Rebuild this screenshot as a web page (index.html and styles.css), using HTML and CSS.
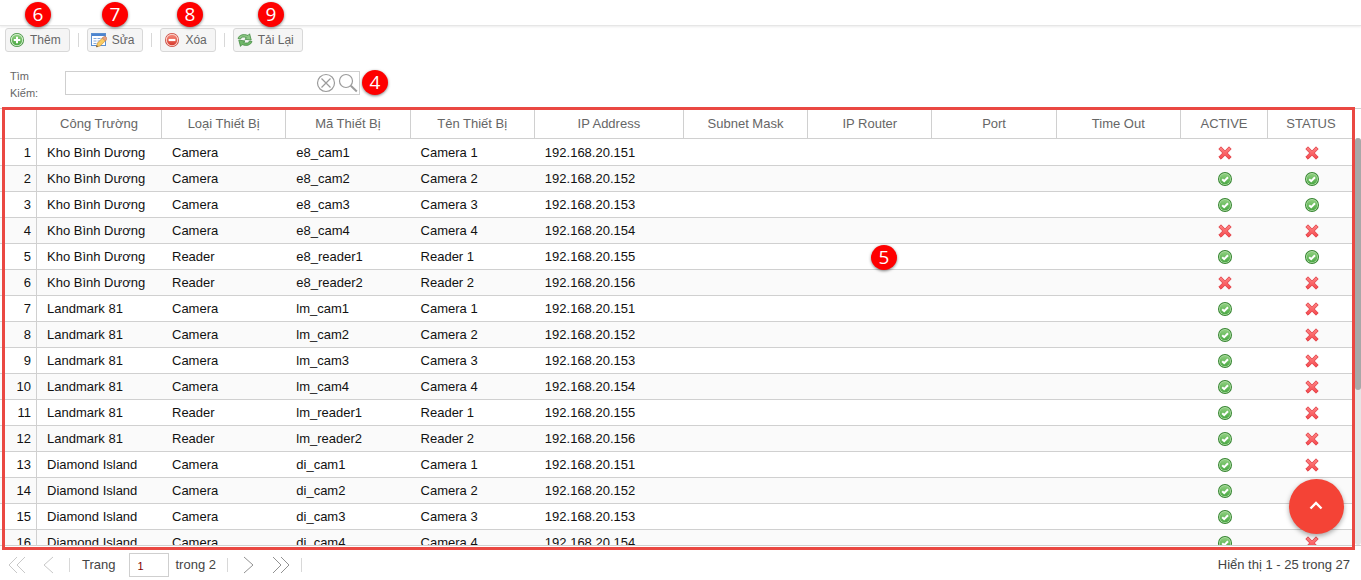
FILE: index.html
```html
<!DOCTYPE html>
<html lang="vi">
<head>
<meta charset="utf-8">
<title>Danh sách thiết bị</title>
<link rel="stylesheet" href="styles.css">
</head>
<body>
<svg class="sprite" aria-hidden="true">
  <defs>
    <linearGradient id="gGreen" x1="0" y1="0" x2="0" y2="1"><stop offset="0" stop-color="#8fd07f"/><stop offset="1" stop-color="#4aa843"/></linearGradient>
    <linearGradient id="gRed" x1="0" y1="0" x2="0" y2="1"><stop offset="0" stop-color="#f58a7a"/><stop offset="1" stop-color="#d6392c"/></linearGradient>
    <linearGradient id="gCross" x1="0" y1="0" x2="0" y2="1"><stop offset="0" stop-color="#ff8585"/><stop offset="1" stop-color="#f5474c"/></linearGradient>
    <symbol id="ok" viewBox="0 0 16 16">
      <circle cx="8" cy="8" r="7" fill="#35852f"/><circle cx="8" cy="8" r="6" fill="#b5dfac"/><circle cx="8" cy="8" r="5.300" fill="url(#gGreen)"/>
      <path d="M5.200 8.200l2 2L11 6.300" fill="none" stroke="#fff" stroke-width="2"/>
    </symbol>
    <symbol id="no" viewBox="0 0 16 16">
      <path d="M4 1.800L8 5.900l4-4.100L14.200 4 10.300 8l3.900 4-2.200 2.200-4-4-4 4L1.800 12l3.900-4-3.900-4z" fill="url(#gCross)" stroke="#dc3138" stroke-width=".8" stroke-linejoin="round"/>
    </symbol>
    <symbol id="add" viewBox="0 0 16 16">
      <circle cx="8" cy="8" r="7" fill="#3f8f3b"/><circle cx="8" cy="8" r="6.200" fill="#d3ecce"/><circle cx="8" cy="8" r="5.200" fill="url(#gGreen)"/>
      <path d="M8 4.800v6.400M4.800 8h6.400" stroke="#fff" stroke-width="2"/>
    </symbol>
    <symbol id="del" viewBox="0 0 16 16">
      <circle cx="8" cy="8" r="7" fill="#c9473c"/><circle cx="8" cy="8" r="6.200" fill="#fbd3cc"/><circle cx="8" cy="8" r="5.200" fill="url(#gRed)"/>
      <path d="M4.600 8h6.800" stroke="#fff" stroke-width="2.200"/>
    </symbol>
    <symbol id="edit" viewBox="0 0 16 16">
      <rect x=".5" y="1.500" width="14" height="12" fill="#fff" stroke="#5b8fd0"/>
      <path d="M1 3h13" stroke="#4c84cf" stroke-width="2"/>
      <path d="M2.500 6.500h3M6.500 6.500h3M10.500 6.500h3M2.500 9h3M6.500 9h3M2.500 11.500h3" stroke="#86abdc"/>
      <path d="M5.300 15l1.200-4 5.800-5.800 2.900 2.800-5.800 5.800z" fill="#f9cc62" stroke="#c58a35" stroke-width=".7"/>
      <path d="M11.300 6.100l1.400-1.400c.6-.6 1.500-.5 2 0l.8.800c.6.600.6 1.400 0 2l-1.300 1.300z" fill="#e8a080" stroke="#b9775c" stroke-width=".6"/>
      <path d="M5.300 15l.5-1.700 1.200 1.200z" fill="#444"/>
    </symbol>
    <symbol id="reload" viewBox="0 0 16 16">
      <path d="M1 6.500C2 3 6.500 1.500 11 3.500L12.600 1.800 14.200 8 8 7.300 9.500 5.700C6.500 4.400 4.300 4.800 3.500 7z" fill="#8cc784" stroke="#448c43" stroke-width=".8" stroke-linejoin="round"/>
      <path d="M15 9.500C14 13 9.500 14.500 5 12.500L3.500 14.400 1.800 8.200 8 8.900 6.500 10.400C9.500 11.600 11.700 11.200 12.500 9z" fill="#6fb768" stroke="#448c43" stroke-width=".8" stroke-linejoin="round"/>
    </symbol>
  </defs>
</svg>

<header class="topbar"></header>

<div class="toolbar">
  <button class="btn" type="button"><svg class="ico"><use href="#add"/></svg>Thêm</button>
  <span class="sep"></span>
  <button class="btn" type="button"><svg class="ico"><use href="#edit"/></svg>Sửa</button>
  <span class="sep"></span>
  <button class="btn" type="button"><svg class="ico"><use href="#del"/></svg>Xóa</button>
  <span class="sep"></span>
  <button class="btn" type="button"><svg class="ico"><use href="#reload"/></svg>Tải Lại</button>
</div>

<form class="search">
  <label class="search-label" for="q">Tìm Kiếm:</label>
  <div class="search-box">
    <input id="q" class="search-input" type="text">
    <button class="icon-btn" type="button" aria-label="Xóa tìm kiếm"><svg width="20" height="20" viewBox="0 0 20 20" fill="none" stroke="#9b9b9b" stroke-width="1.200"><circle cx="10" cy="10" r="8.500"/><path d="M5.500 5.500l9 9M14.500 5.500l-9 9"/></svg></button>
    <button class="icon-btn" type="button" aria-label="Tìm"><svg width="20" height="20" viewBox="0 0 20 20" fill="none" stroke="#9b9b9b" stroke-width="1.200"><circle cx="8" cy="8" r="6.500"/><path d="M12.800 12.800l6 5.700" stroke-width="2"/></svg></button>
  </div>
</form>

<main class="grid">
  <div class="grid-view">
    <table class="devices">
      <colgroup><col class="c-num"><col class="c-site"><col><col><col><col class="c-ip"><col><col><col><col><col class="c-flag"><col class="c-flag"></colgroup>
      <thead>
        <tr><th></th><th>Công Trường</th><th>Loại Thiết Bị</th><th>Mã Thiết Bị</th><th>Tên Thiết Bị</th><th>IP Address</th><th>Subnet Mask</th><th>IP Router</th><th>Port</th><th>Time Out</th><th>ACTIVE</th><th>STATUS</th></tr>
      </thead>
      <tbody>
        <tr><td>1</td><td>Kho Bình Dương</td><td>Camera</td><td>e8_cam1</td><td>Camera 1</td><td>192.168.20.151</td><td></td><td></td><td></td><td></td><td><svg class="flag"><use href="#no"/></svg></td><td><svg class="flag"><use href="#no"/></svg></td></tr>
        <tr><td>2</td><td>Kho Bình Dương</td><td>Camera</td><td>e8_cam2</td><td>Camera 2</td><td>192.168.20.152</td><td></td><td></td><td></td><td></td><td><svg class="flag"><use href="#ok"/></svg></td><td><svg class="flag"><use href="#ok"/></svg></td></tr>
        <tr><td>3</td><td>Kho Bình Dương</td><td>Camera</td><td>e8_cam3</td><td>Camera 3</td><td>192.168.20.153</td><td></td><td></td><td></td><td></td><td><svg class="flag"><use href="#ok"/></svg></td><td><svg class="flag"><use href="#ok"/></svg></td></tr>
        <tr><td>4</td><td>Kho Bình Dương</td><td>Camera</td><td>e8_cam4</td><td>Camera 4</td><td>192.168.20.154</td><td></td><td></td><td></td><td></td><td><svg class="flag"><use href="#no"/></svg></td><td><svg class="flag"><use href="#no"/></svg></td></tr>
        <tr><td>5</td><td>Kho Bình Dương</td><td>Reader</td><td>e8_reader1</td><td>Reader 1</td><td>192.168.20.155</td><td></td><td></td><td></td><td></td><td><svg class="flag"><use href="#ok"/></svg></td><td><svg class="flag"><use href="#ok"/></svg></td></tr>
        <tr><td>6</td><td>Kho Bình Dương</td><td>Reader</td><td>e8_reader2</td><td>Reader 2</td><td>192.168.20.156</td><td></td><td></td><td></td><td></td><td><svg class="flag"><use href="#no"/></svg></td><td><svg class="flag"><use href="#no"/></svg></td></tr>
        <tr><td>7</td><td>Landmark 81</td><td>Camera</td><td>lm_cam1</td><td>Camera 1</td><td>192.168.20.151</td><td></td><td></td><td></td><td></td><td><svg class="flag"><use href="#ok"/></svg></td><td><svg class="flag"><use href="#no"/></svg></td></tr>
        <tr><td>8</td><td>Landmark 81</td><td>Camera</td><td>lm_cam2</td><td>Camera 2</td><td>192.168.20.152</td><td></td><td></td><td></td><td></td><td><svg class="flag"><use href="#ok"/></svg></td><td><svg class="flag"><use href="#no"/></svg></td></tr>
        <tr><td>9</td><td>Landmark 81</td><td>Camera</td><td>lm_cam3</td><td>Camera 3</td><td>192.168.20.153</td><td></td><td></td><td></td><td></td><td><svg class="flag"><use href="#ok"/></svg></td><td><svg class="flag"><use href="#no"/></svg></td></tr>
        <tr><td>10</td><td>Landmark 81</td><td>Camera</td><td>lm_cam4</td><td>Camera 4</td><td>192.168.20.154</td><td></td><td></td><td></td><td></td><td><svg class="flag"><use href="#ok"/></svg></td><td><svg class="flag"><use href="#no"/></svg></td></tr>
        <tr><td>11</td><td>Landmark 81</td><td>Reader</td><td>lm_reader1</td><td>Reader 1</td><td>192.168.20.155</td><td></td><td></td><td></td><td></td><td><svg class="flag"><use href="#ok"/></svg></td><td><svg class="flag"><use href="#no"/></svg></td></tr>
        <tr><td>12</td><td>Landmark 81</td><td>Reader</td><td>lm_reader2</td><td>Reader 2</td><td>192.168.20.156</td><td></td><td></td><td></td><td></td><td><svg class="flag"><use href="#ok"/></svg></td><td><svg class="flag"><use href="#no"/></svg></td></tr>
        <tr><td>13</td><td>Diamond Island</td><td>Camera</td><td>di_cam1</td><td>Camera 1</td><td>192.168.20.151</td><td></td><td></td><td></td><td></td><td><svg class="flag"><use href="#ok"/></svg></td><td><svg class="flag"><use href="#no"/></svg></td></tr>
        <tr><td>14</td><td>Diamond Island</td><td>Camera</td><td>di_cam2</td><td>Camera 2</td><td>192.168.20.152</td><td></td><td></td><td></td><td></td><td><svg class="flag"><use href="#ok"/></svg></td><td><svg class="flag"><use href="#no"/></svg></td></tr>
        <tr><td>15</td><td>Diamond Island</td><td>Camera</td><td>di_cam3</td><td>Camera 3</td><td>192.168.20.153</td><td></td><td></td><td></td><td></td><td><svg class="flag"><use href="#ok"/></svg></td><td><svg class="flag"><use href="#no"/></svg></td></tr>
        <tr><td>16</td><td>Diamond Island</td><td>Camera</td><td>di_cam4</td><td>Camera 4</td><td>192.168.20.154</td><td></td><td></td><td></td><td></td><td><svg class="flag"><use href="#ok"/></svg></td><td><svg class="flag"><use href="#no"/></svg></td></tr>
      </tbody>
    </table>
  </div>
  <div class="scroll"><div class="track"><div class="thumb"></div></div></div>
  <div class="frame"></div>
</main>

<footer class="pager">
  <button class="page-btn" type="button" aria-label="Trang đầu" disabled><svg width="18" height="18" viewBox="0 0 18 18"><path d="M9 1L1 9l8 8M17 1L9 9l8 8"/></svg></button>
  <button class="page-btn" type="button" aria-label="Trang trước" disabled><svg width="18" height="18" viewBox="0 0 18 18"><path d="M13 1L4 9l9 8"/></svg></button>
  <span class="sep"></span>
  <label class="page-label" for="page">Trang</label>
  <input id="page" class="page-input" type="text" value="1">
  <span class="page-total">trong 2</span>
  <span class="sep"></span>
  <button class="page-btn" type="button" aria-label="Trang sau"><svg width="18" height="18" viewBox="0 0 18 18"><path d="M4 1l9 8-9 8"/></svg></button>
  <button class="page-btn" type="button" aria-label="Trang cuối"><svg width="18" height="18" viewBox="0 0 18 18"><path d="M1 1l8 8-8 8M9 1l8 8-8 8"/></svg></button>
  <span class="sep"></span>
  <span class="summary">Hiển thị 1 - 25 trong 27</span>
</footer>

<button class="fab" type="button" aria-label="Lên đầu trang"><svg width="15" height="11" viewBox="0 0 15 11"><path d="M1.500 7.500L7 2l5.500 5.500" fill="none" stroke="#fff" stroke-width="2.400"/></svg></button>

<span class="pin pin-add">6</span>
<span class="pin pin-edit">7</span>
<span class="pin pin-del">8</span>
<span class="pin pin-reload">9</span>
<span class="pin pin-search">4</span>
<span class="pin pin-grid">5</span>
</body>
</html>
```
FILE: styles.css
```css
* { box-sizing: border-box; }

body {
  margin: 0;
  height: 100vh;
  display: flex;
  flex-direction: column;
  position: relative;
  overflow: hidden;
  background: #fff;
  color: #222;
  font: 13px/16px "Liberation Sans", Arial, sans-serif;
}

button, input { font: inherit; color: inherit; }

.sprite { position: absolute; width: 0; height: 0; }

.topbar {
  height: 26px;
  flex: none;
  border-bottom: 1px solid #e6e6e6;
  box-shadow: 0 1px 2px rgba(0, 0, 0, .08);
}

.toolbar {
  display: flex;
  align-items: center;
  gap: 8px;
  padding: 2px 5px;
}

.btn {
  display: flex;
  align-items: center;
  gap: 5px;
  height: 24px;
  padding: 0 8px 0 3px;
  border: 1px solid #d8d8d8;
  border-radius: 3px;
  background: #f5f5f5;
  color: #666;
  font-size: 12px;
}

.ico, .flag { display: block; width: 16px; height: 16px; }
.flag { margin: 0 auto; }

.sep { width: 1px; height: 14px; background: #d8d8d8; }

.search {
  display: flex;
  align-items: flex-start;
  padding: 14px 0 6px 10px;
}

.search-label {
  width: 55px;
  padding-right: 20px;
  color: #666;
  font-size: 11px;
  line-height: 17px;
}

.search-box {
  display: flex;
  align-items: center;
  gap: 2px;
  width: 295px;
  height: 24px;
  margin-top: 3px;
  padding-right: 1px;
  border: 1px solid #cfcfcf;
}

.search-input { flex: 1; min-width: 0; border: 0; outline: 0; padding: 0 6px; background: none; }

.icon-btn { display: flex; padding: 0; border: 0; background: none; }

.grid {
  position: relative;
  display: flex;
  flex: 1;
  min-height: 0;
  border-top: 1px solid #d0d0d0;
  border-bottom: 1px solid #d0d0d0;
}

.grid-view { flex: 1; overflow: hidden; }

.devices {
  width: 100%;
  table-layout: fixed;
  border-collapse: separate;
  border-spacing: 0;
}

.c-num { width: 37px; }
.c-site { width: 125px; }
.c-ip { width: 149px; }
.c-flag { width: 87px; }

.devices th {
  height: 30px;
  padding: 0;
  border-right: 1px solid #d0d0d0;
  border-bottom: 1px solid #d0d0d0;
  color: #666;
  font-weight: normal;
}

.devices td {
  height: 26px;
  padding: 0 0 0 10px;
  border-bottom: 1px solid #d0d0d0;
  color: #111;
  white-space: nowrap;
}

.devices tbody tr:nth-child(even) td { background: #fafafa; }

.devices tbody td:first-child {
  padding: 0 5px 0 0;
  border-right: 1px solid #d0d0d0;
  background: #fff;
  text-align: right;
}

.devices td:nth-child(n + 11) { padding: 0; }

.devices tbody tr:first-child td { height: 27px; padding-top: 1px; }

.scroll { width: 6px; padding-top: 29px; }
.track { height: 100%; background: #e6e6e6; border-radius: 3px; }
.thumb { height: 62%; background: #a8a8a8; border-radius: 3px; }

.frame {
  position: absolute;
  inset: -2px 6px -5px 2px;
  border: 3px solid #ea4842;
  pointer-events: none;
}

.pager {
  display: flex;
  align-items: center;
  flex: none;
  height: 34px;
  padding: 4px 11px 0 8px;
  color: #444;
}

.page-btn { display: flex; padding: 0; border: 0; background: none; }
.page-btn path { fill: none; stroke: #919191; }
.page-btn:disabled path { stroke: #c8c8c8; }
.page-btn + .page-btn { margin-left: 14px; }
.pager .sep { margin: 0 12px 0 11px; }

.page-input {
  width: 40px;
  height: 24px;
  margin: 0 6px 0 14px;
  padding: 2px 7px 0;
  border: 1px solid #cfcfcf;
  color: #800000;
  font-size: 11px;
}

.summary { margin-left: auto; }

.fab {
  position: absolute;
  right: 17px;
  bottom: 46px;
  display: flex;
  align-items: center;
  justify-content: center;
  width: 55px;
  height: 55px;
  padding: 0;
  border: 0;
  border-radius: 50%;
  background: #f44336;
  box-shadow: 0 2px 5px rgba(0, 0, 0, .35);
}

.pin {
  position: absolute;
  width: 26px;
  height: 25px;
  border-radius: 50%;
  background: #fe0000;
  box-shadow: 0 1px 3px rgba(0, 0, 0, .5);
  color: #fff;
  font: 19px/24px "Open Sans", sans-serif;
  text-align: center;
}

.pin-add { left: 25px; top: 2px; }
.pin-edit { left: 102px; top: 2px; }
.pin-del { left: 177px; top: 2px; }
.pin-reload { left: 258px; top: 2px; }
.pin-search { left: 362px; top: 70px; }
.pin-grid { left: 64%; top: 245px; }
```
